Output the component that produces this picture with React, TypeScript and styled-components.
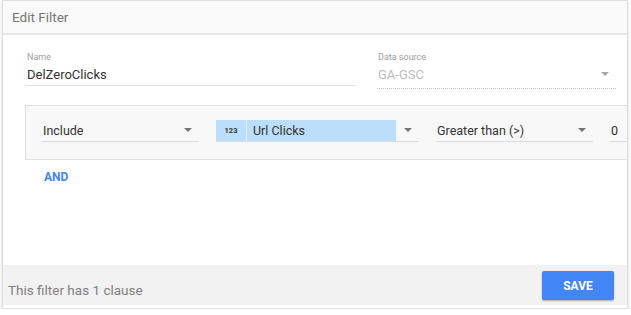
import React from 'react';
import styled, { createGlobalStyle } from 'styled-components';

const GlobalStyle = createGlobalStyle`
  body {
    margin: 0;
    background: #ffffff;
    font-family: Roboto, 'Liberation Sans', sans-serif;
  }
`;

const Panel = styled.div`
  margin: 0 2px;
  width: 624px;
  border: 1px solid #e0e0e0;
  background: #ffffff;
  box-shadow: 0 2px 3px rgba(0, 0, 0, 0.18);
  overflow: hidden;
  display: flex;
  flex-direction: column;
`;

const Header = styled.div`
  height: 32px;
  background: #fafafa;
  border-bottom: 2px solid #e6e6e6;
  display: flex;
  align-items: center;
  padding-left: 9px;
  font-size: 13.5px;
  color: #757575;
`;

const Body = styled.div`
  height: 230px;
  padding: 16px 0 0 23px;
  box-sizing: border-box;
`;

const TopRow = styled.div`
  display: flex;
  align-items: flex-start;
  gap: 21px;
`;

const Field = styled.div<{ width: number }>`
  width: ${({ width }) => width}px;
  display: flex;
  flex-direction: column;
`;

const Label = styled.div`
  font-size: 9px;
  line-height: 12px;
  color: #9e9e9e;
  padding-left: 1px;
`;

const Value = styled.div<{ disabled?: boolean }>`
  height: 22px;
  display: flex;
  align-items: center;
  justify-content: space-between;
  font-size: 13px;
  padding-left: 1px;
  color: ${({ disabled }) => (disabled ? '#bdbdbd' : '#333333')};
  border-bottom: 1px ${({ disabled }) => (disabled ? 'dotted #c4c4c4' : 'solid #e0e0e0')};
  padding-bottom: ${({ disabled }) => (disabled ? 3 : 0)}px;
`;

const Arrow = styled.span<{ light?: boolean }>`
  width: 0;
  height: 0;
  border-left: 4px solid transparent;
  border-right: 4px solid transparent;
  border-top: 4px solid ${({ light }) => (light ? '#a8a8a8' : '#757575')};
  margin-right: 7px;
  flex-shrink: 0;
`;

const FilterBox = styled.div`
  margin: 16px 0 0 -1px;
  width: 660px;
  height: 55px;
  box-sizing: border-box;
  border: 1px solid #e0e0e0;
  background: #f8f8f8;
  padding: 13px 0 0 16px;
  display: flex;
  gap: 17px;
`;

const Select = styled.div<{ width: number }>`
  width: ${({ width }) => width}px;
  height: 23px;
  box-sizing: border-box;
  border-bottom: 1px solid #dddddd;
  display: flex;
  align-items: center;
  justify-content: space-between;
  font-size: 12.5px;
  color: #333333;
  padding-left: 1px;
  flex-shrink: 0;
`;

const Chip = styled.div`
  display: flex;
  height: 21px;
  margin-left: -1px;
  gap: 1px;
  background: #e3f0fc;
`;

const ChipType = styled.span`
  width: 30px;
  background: #bbdefb;
  display: flex;
  align-items: center;
  justify-content: center;
  font-size: 7.5px;
  font-weight: 700;
  color: #333333;
`;

const ChipName = styled.span`
  width: 143px;
  background: #bbdefb;
  display: flex;
  align-items: center;
  padding-left: 6px;
  font-size: 12.5px;
  color: #333333;
`;

const AndLink = styled.div`
  margin: 10px 0 0 18px;
  font-size: 12px;
  font-weight: 700;
  color: #4285f4;
`;

const Footer = styled.div`
  height: 40px;
  background: #f2f2f2;
  display: flex;
  align-items: center;
  justify-content: space-between;
  padding: 0 13px 0 5px;
  margin-bottom: 3px;
`;

const FooterText = styled.span`
  font-size: 13.5px;
  color: #808080;
  padding-top: 9px;
`;

const SaveButton = styled.button`
  width: 72px;
  height: 29px;
  border: none;
  border-radius: 2px;
  background: #4285f4;
  color: #ffffff;
  font-family: Roboto, 'Liberation Sans', sans-serif;
  font-size: 12px;
  font-weight: 700;
  box-shadow: 0 1px 2px rgba(0, 0, 0, 0.3);
  margin-top: 1px;
`;

export default function App() {
  return (
    <>
      <GlobalStyle />
      <Panel>
        <Header>Edit Filter</Header>
        <Body>
          <TopRow>
            <Field width={330}>
              <Label>Name</Label>
              <Value>DelZeroClicks</Value>
            </Field>
            <Field width={239}>
              <Label>Data source</Label>
              <Value disabled>
                GA-GSC
                <Arrow light />
              </Value>
            </Field>
          </TopRow>
          <FilterBox>
            <Select width={157}>
              Include
              <Arrow />
            </Select>
            <Select width={203}>
              <Chip>
                <ChipType>123</ChipType>
                <ChipName>Url Clicks</ChipName>
              </Chip>
              <Arrow />
            </Select>
            <Select width={157}>
              Greater than (&gt;)
              <Arrow />
            </Select>
            <Select width={40}>0</Select>
          </FilterBox>
          <AndLink>AND</AndLink>
        </Body>
        <Footer>
          <FooterText>This filter has 1 clause</FooterText>
          <SaveButton>SAVE</SaveButton>
        </Footer>
      </Panel>
    </>
  );
}
